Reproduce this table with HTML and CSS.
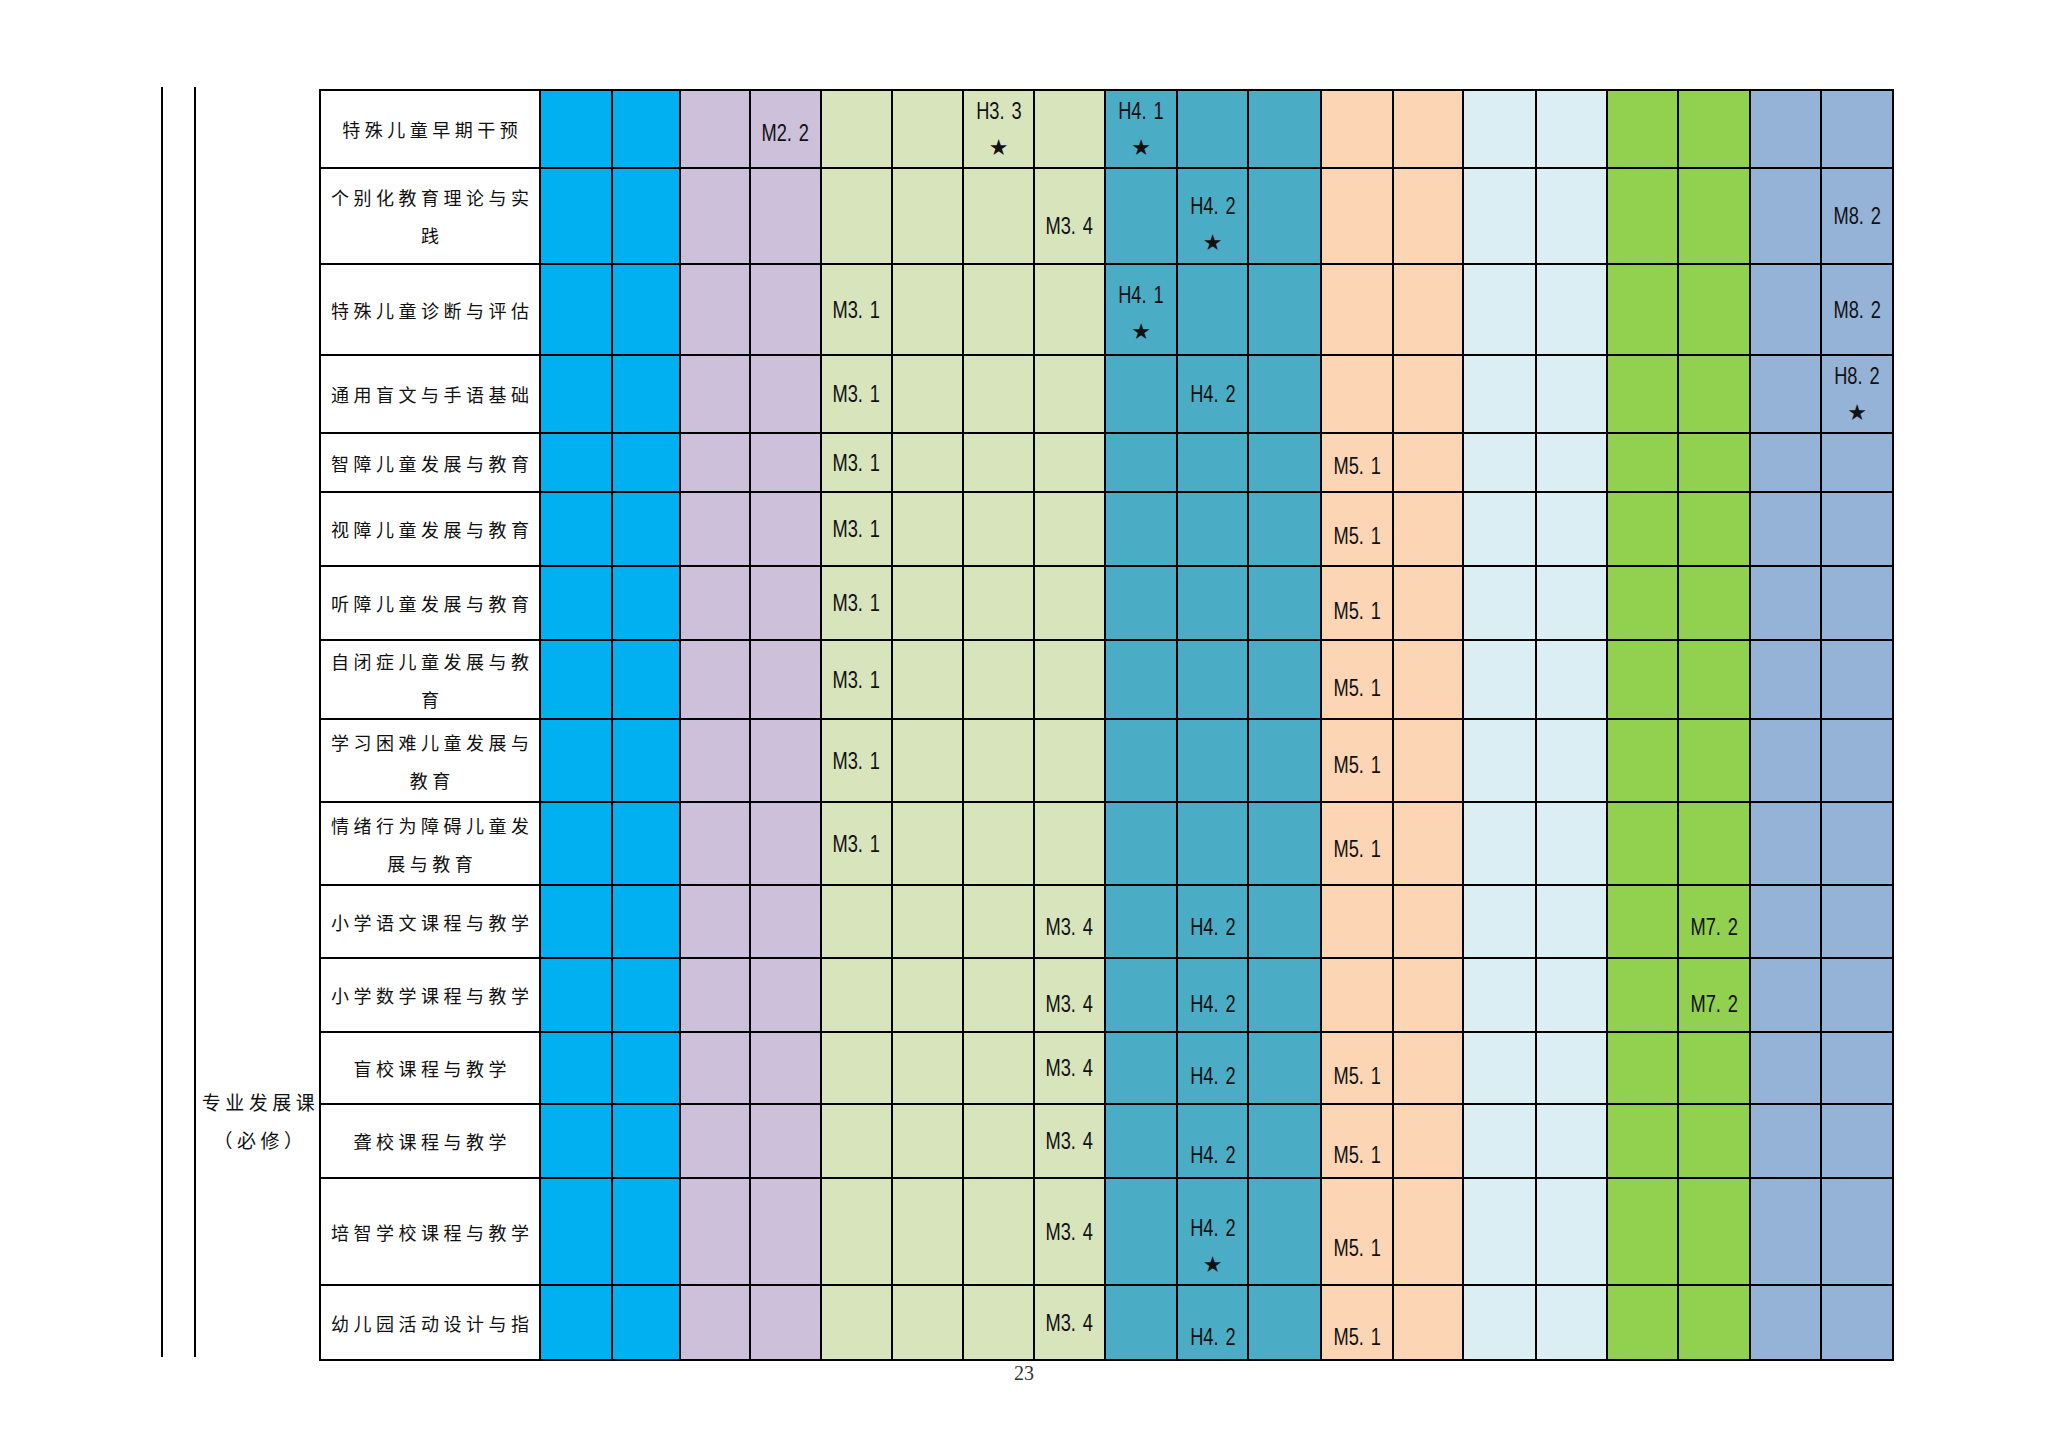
FILE: index.html
```html
<!DOCTYPE html>
<html lang="zh-CN">
<head>
<meta charset="utf-8">
<title>专业发展课（必修）课程目标矩阵</title>
<link rel="stylesheet" href="styles.css">
</head>
<body>
<div class="page">
  <div class="frame">
    <div class="rule rule-a"></div>
    <div class="rule rule-b"><div class="cat">专业发展课<br>（必修）</div></div>
    <table class="matrix">
      <colgroup>
        <col><col><col><col><col><col><col><col><col><col>
        <col><col><col><col><col><col><col><col><col><col>
      </colgroup>
      <tbody>
        <tr>
          <td class="name">特殊儿童早期干预</td>
          <td></td><td></td><td></td><td class="s4"><span class="code">M2<span class="dot">.</span>2</span></td>
          <td></td><td></td><td><span class="code">H3<span class="dot">.</span>3</span><br><span class="star">★</span></td><td></td>
          <td><span class="code">H4<span class="dot">.</span>1</span><br><span class="star">★</span></td><td></td><td></td>
          <td></td><td></td><td></td><td></td><td></td><td></td><td></td><td></td>
        </tr>
        <tr>
          <td class="name">个别化教育理论与实践</td>
          <td></td><td></td><td></td><td></td>
          <td></td><td></td><td></td><td class="s10"><span class="code">M3<span class="dot">.</span>4</span></td>
          <td></td><td class="s8"><span class="code">H4<span class="dot">.</span>2</span><br><span class="star">★</span></td><td></td>
          <td></td><td></td><td></td><td></td><td></td><td></td><td></td><td><span class="code">M8<span class="dot">.</span>2</span></td>
        </tr>
        <tr>
          <td class="name">特殊儿童诊断与评估</td>
          <td></td><td></td><td></td><td></td>
          <td><span class="code">M3<span class="dot">.</span>1</span></td><td></td><td></td><td></td>
          <td class="s4"><span class="code">H4<span class="dot">.</span>1</span><br><span class="star">★</span></td><td></td><td></td>
          <td></td><td></td><td></td><td></td><td></td><td></td><td></td><td><span class="code">M8<span class="dot">.</span>2</span></td>
        </tr>
        <tr>
          <td class="name">通用盲文与手语基础</td>
          <td></td><td></td><td></td><td></td>
          <td><span class="code">M3<span class="dot">.</span>1</span></td><td></td><td></td><td></td>
          <td></td><td><span class="code">H4<span class="dot">.</span>2</span></td><td></td>
          <td></td><td></td><td></td><td></td><td></td><td></td><td></td><td><span class="code">H8<span class="dot">.</span>2</span><br><span class="star">★</span></td>
        </tr>
        <tr>
          <td class="name">智障儿童发展与教育</td>
          <td></td><td></td><td></td><td></td>
          <td><span class="code">M3<span class="dot">.</span>1</span></td><td></td><td></td><td></td>
          <td></td><td></td><td></td>
          <td class="s3"><span class="code">M5<span class="dot">.</span>1</span></td><td></td><td></td><td></td><td></td><td></td><td></td><td></td>
        </tr>
        <tr>
          <td class="name">视障儿童发展与教育</td>
          <td></td><td></td><td></td><td></td>
          <td><span class="code">M3<span class="dot">.</span>1</span></td><td></td><td></td><td></td>
          <td></td><td></td><td></td>
          <td class="s7"><span class="code">M5<span class="dot">.</span>1</span></td><td></td><td></td><td></td><td></td><td></td><td></td><td></td>
        </tr>
        <tr>
          <td class="name">听障儿童发展与教育</td>
          <td></td><td></td><td></td><td></td>
          <td><span class="code">M3<span class="dot">.</span>1</span></td><td></td><td></td><td></td>
          <td></td><td></td><td></td>
          <td class="s8"><span class="code">M5<span class="dot">.</span>1</span></td><td></td><td></td><td></td><td></td><td></td><td></td><td></td>
        </tr>
        <tr>
          <td class="name">自闭症儿童发展与教育</td>
          <td></td><td></td><td></td><td></td>
          <td><span class="code">M3<span class="dot">.</span>1</span></td><td></td><td></td><td></td>
          <td></td><td></td><td></td>
          <td class="s8"><span class="code">M5<span class="dot">.</span>1</span></td><td></td><td></td><td></td><td></td><td></td><td></td><td></td>
        </tr>
        <tr>
          <td class="name">学习困难儿童发展与教育</td>
          <td></td><td></td><td></td><td></td>
          <td><span class="code">M3<span class="dot">.</span>1</span></td><td></td><td></td><td></td>
          <td></td><td></td><td></td>
          <td class="s4"><span class="code">M5<span class="dot">.</span>1</span></td><td></td><td></td><td></td><td></td><td></td><td></td><td></td>
        </tr>
        <tr>
          <td class="name">情绪行为障碍儿童发展与教育</td>
          <td></td><td></td><td></td><td></td>
          <td><span class="code">M3<span class="dot">.</span>1</span></td><td></td><td></td><td></td>
          <td></td><td></td><td></td>
          <td class="s5"><span class="code">M5<span class="dot">.</span>1</span></td><td></td><td></td><td></td><td></td><td></td><td></td><td></td>
        </tr>
        <tr>
          <td class="name">小学语文课程与教学</td>
          <td></td><td></td><td></td><td></td>
          <td></td><td></td><td></td><td class="s5"><span class="code">M3<span class="dot">.</span>4</span></td>
          <td></td><td class="s5"><span class="code">H4<span class="dot">.</span>2</span></td><td></td>
          <td></td><td></td><td></td><td></td><td></td><td class="s5"><span class="code">M7<span class="dot">.</span>2</span></td><td></td><td></td>
        </tr>
        <tr>
          <td class="name">小学数学课程与教学</td>
          <td></td><td></td><td></td><td></td>
          <td></td><td></td><td></td><td class="s9"><span class="code">M3<span class="dot">.</span>4</span></td>
          <td></td><td class="s9"><span class="code">H4<span class="dot">.</span>2</span></td><td></td>
          <td></td><td></td><td></td><td></td><td></td><td class="s9"><span class="code">M7<span class="dot">.</span>2</span></td><td></td><td></td>
        </tr>
        <tr>
          <td class="name">盲校课程与教学</td>
          <td></td><td></td><td></td><td></td>
          <td></td><td></td><td></td><td><span class="code">M3<span class="dot">.</span>4</span></td>
          <td></td><td class="s8"><span class="code">H4<span class="dot">.</span>2</span></td><td></td>
          <td class="s8"><span class="code">M5<span class="dot">.</span>1</span></td><td></td><td></td><td></td><td></td><td></td><td></td><td></td>
        </tr>
        <tr>
          <td class="name">聋校课程与教学</td>
          <td></td><td></td><td></td><td></td>
          <td></td><td></td><td></td><td><span class="code">M3<span class="dot">.</span>4</span></td>
          <td></td><td class="s14"><span class="code">H4<span class="dot">.</span>2</span></td><td></td>
          <td class="s14"><span class="code">M5<span class="dot">.</span>1</span></td><td></td><td></td><td></td><td></td><td></td><td></td><td></td>
        </tr>
        <tr>
          <td class="name">培智学校课程与教学</td>
          <td></td><td></td><td></td><td></td>
          <td></td><td></td><td></td><td><span class="code">M3<span class="dot">.</span>4</span></td>
          <td></td><td class="s15"><span class="code">H4<span class="dot">.</span>2</span><br><span class="star">★</span></td><td></td>
          <td class="s16"><span class="code">M5<span class="dot">.</span>1</span></td><td></td><td></td><td></td><td></td><td></td><td></td><td></td>
        </tr>
        <tr>
          <td class="name">幼儿园活动设计与指</td>
          <td></td><td></td><td></td><td></td>
          <td></td><td></td><td></td><td><span class="code">M3<span class="dot">.</span>4</span></td>
          <td></td><td class="s14"><span class="code">H4<span class="dot">.</span>2</span></td><td></td>
          <td class="s14"><span class="code">M5<span class="dot">.</span>1</span></td><td></td><td></td><td></td><td></td><td></td><td></td><td></td>
        </tr>
      </tbody>
    </table>
  </div>
  <div class="pagenum">23</div>
</div>
</body>
</html>
```
FILE: styles.css
```css
html, body {
  margin: 0;
  padding: 0;
  background: #ffffff;
}

body {
  width: 2048px;
  height: 1448px;
  overflow: hidden;
  font-family: "Noto Sans CJK SC", "Noto Sans", sans-serif;
  color: #111;
}

.page {
  padding-top: 87px;
}

.frame {
  display: flex;
  align-items: flex-start;
  margin-left: 161px;
}

.rule {
  box-sizing: border-box;
  height: 1270px;
  border-left: 2px solid #000;
  flex: none;
}

.rule-a {
  width: 33px;
}

.rule-b {
  width: 125px;
  display: flex;
  flex-direction: column;
  justify-content: flex-end;
  padding-bottom: 198px;
}

.cat {
  text-align: center;
  font-size: 19px;
  line-height: 38px;
  letter-spacing: 4.5px;
  padding-left: 2px;
  margin-right: -8px;
  margin-left: -4px;
  white-space: nowrap;
  color: #111;
}

.matrix {
  flex: none;
  margin-top: 2px;
  width: 1575px;
  table-layout: fixed;
  border-collapse: separate;
  border-spacing: 0;
  border-top: 2px solid #000;
  border-left: 2px solid #000;
}

/* column widths (cell border-box, line to line) */
.matrix col:nth-child(1) { width: 220px; }
.matrix col:nth-child(2) { width: 72px; }
.matrix col:nth-child(3) { width: 68px; }
.matrix col:nth-child(4) { width: 70px; }
.matrix col:nth-child(5) { width: 71px; }
.matrix col:nth-child(6) { width: 71px; }
.matrix col:nth-child(7) { width: 71px; }
.matrix col:nth-child(8) { width: 71px; }
.matrix col:nth-child(9) { width: 71px; }
.matrix col:nth-child(10) { width: 72px; }
.matrix col:nth-child(11) { width: 71px; }
.matrix col:nth-child(12) { width: 73px; }
.matrix col:nth-child(13) { width: 72px; }
.matrix col:nth-child(14) { width: 70px; }
.matrix col:nth-child(15) { width: 73px; }
.matrix col:nth-child(16) { width: 71px; }
.matrix col:nth-child(17) { width: 71px; }
.matrix col:nth-child(18) { width: 72px; }
.matrix col:nth-child(19) { width: 71px; }
.matrix col:nth-child(20) { width: 72px; }

.matrix td {
  padding: 0;
  border-right: 2px solid #000;
  border-bottom: 2px solid #000;
  text-align: center;
  vertical-align: middle;
  font-family: "Liberation Sans", sans-serif;
  font-size: 24px;
  line-height: 36px;
  color: #111;
  overflow: hidden;
  white-space: nowrap;
}

.matrix td.name {
  background: #ffffff;
  font-family: "Noto Sans CJK SC", "Noto Sans", sans-serif;
  font-size: 18px;
  line-height: 38px;
  letter-spacing: 4.5px;
  padding-left: 4.5px;
  white-space: normal;
}

.code {
  display: inline-block;
  transform: scaleX(0.76);
  transform-origin: center;
  margin: 0 -8px;
}

.dot {
  margin-right: 9px;
}

.star {
  font-family: "DejaVu Sans", sans-serif;
  font-size: 22px;
  line-height: 36px;
}

/* column colours */
.matrix td:nth-child(2),
.matrix td:nth-child(3) { background: #00b0f0; }
.matrix td:nth-child(4),
.matrix td:nth-child(5) { background: #ccc0da; }
.matrix td:nth-child(6),
.matrix td:nth-child(7),
.matrix td:nth-child(8),
.matrix td:nth-child(9) { background: #d8e4bc; }
.matrix td:nth-child(10),
.matrix td:nth-child(11),
.matrix td:nth-child(12) { background: #4bacc6; }
.matrix td:nth-child(13),
.matrix td:nth-child(14) { background: #fcd5b4; }
.matrix td:nth-child(15),
.matrix td:nth-child(16) { background: #daeef3; }
.matrix td:nth-child(17),
.matrix td:nth-child(18) { background: #92d050; }
.matrix td:nth-child(19),
.matrix td:nth-child(20) { background: #95b3d7; }

/* row heights (line to line) */
.matrix tr:nth-child(1) { height: 78px; }
.matrix tr:nth-child(2) { height: 96px; }
.matrix tr:nth-child(3) { height: 91px; }
.matrix tr:nth-child(4) { height: 78px; }
.matrix tr:nth-child(5) { height: 59px; }
.matrix tr:nth-child(6) { height: 74px; }
.matrix tr:nth-child(7) { height: 74px; }
.matrix tr:nth-child(8) { height: 79px; }
.matrix tr:nth-child(9) { height: 83px; }
.matrix tr:nth-child(10) { height: 83px; }
.matrix tr:nth-child(11) { height: 73px; }
.matrix tr:nth-child(12) { height: 74px; }
.matrix tr:nth-child(13) { height: 72px; }
.matrix tr:nth-child(14) { height: 74px; }
.matrix tr:nth-child(15) { height: 107px; }
.matrix tr:nth-child(16) { height: 75px; }

/* downward shifts of the cell text (padding-top = 2 x shift) */
.matrix td.s3 { padding-top: 6px; }
.matrix td.s4 { padding-top: 8px; }
.matrix td.s5 { padding-top: 10px; }
.matrix td.s7 { padding-top: 14px; }
.matrix td.s8 { padding-top: 16px; }
.matrix td.s9 { padding-top: 18px; }
.matrix td.s10 { padding-top: 20px; }
.matrix td.s14 { padding-top: 28px; }
.matrix td.s15 { padding-top: 30px; }
.matrix td.s16 { padding-top: 32px; }

.pagenum {
  text-align: center;
  font-family: "Liberation Serif", serif;
  font-size: 20px;
  line-height: 20px;
  color: #333;
  margin-top: 2px;
}
```
